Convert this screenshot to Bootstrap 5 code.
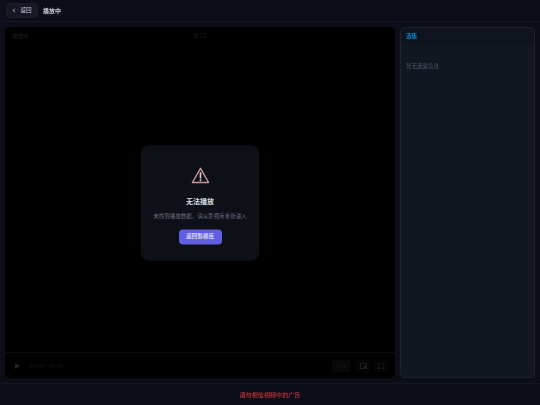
<!DOCTYPE html>
<html lang="zh">
<head>
<meta charset="utf-8">
<title>播放中</title>
<link href="https://cdn.jsdelivr.net/npm/bootstrap@5.3.0/dist/css/bootstrap.min.css" rel="stylesheet">
<style>
html,body{height:100%;margin:0}
body{background:#0b0e17;font-family:Inter,"Noto Sans CJK SC",sans-serif;overflow:hidden}
.shell{height:405px;opacity:.999}
.topbar{height:22px;padding:0 6px;gap:5px;border-bottom:1px solid #141823;background:#0c0f18}
.backbtn{height:15px;width:32px;font-size:5.6px;line-height:1;color:#c9ccd5;background:#171a26;border:1px solid #1b1f2c;border-radius:4px;padding:0;gap:4px}
.backbtn svg{width:4px;height:5px}
.pagetitle{font-size:6px;font-weight:600;color:#c9ccd5}
.mainarea{padding:5px 5px;gap:5px;height:361px}
.player{flex:1 1 auto;background:#000;border-radius:5px;min-width:0}
.ptop{padding:5px 7px 3px;color:#202022;font-size:5.5px;height:14px;line-height:8px}
.ptime{margin-left:164px}
.pstage{flex:1 1 auto}
.errbox{width:118px;height:115px;background:#0f1119;border:1px solid #13151e;border-radius:8px;padding:20px 8px 0}
.errbox svg{width:19px;height:18px;display:block}
.errtitle{font-size:7px;font-weight:600;color:#dfe1e8;margin-top:12px;line-height:10px}
.errtext{font-size:5.5px;color:#6b7080;margin-top:5px;line-height:8px;white-space:nowrap}
.errbtn{height:15px;width:43px;margin-top:10px;background:#6260e2;color:#dcdcf8;font-size:5.6px;font-weight:600;border:0;border-radius:4px;padding:0;line-height:1}
.pctrl{height:26px;border-top:1px solid #0c0c0e;padding:1px 7px 0 10px;color:#1c1c1e;font-size:5.4px}
.pctrl svg{display:block}
.ratebox{width:19px;height:12px;background:#080809;border-radius:2px;margin-right:5px}
.iconbox{width:14px;height:12px;background:#060607;border-radius:2px}
.timelabel{margin-left:9px}
.sidepanel{flex:0 0 135px;background:#131722;border:1px solid #20242f;border-radius:5px}
.sidehead{height:18px;padding:0 5px;background:#10141e;border-bottom:1px solid #161a25;color:#0e8fd9;font-size:5.6px;font-weight:600;border-radius:5px 5px 0 0}
.sidebody{padding:16px 5px;font-size:5.5px;color:#555b69;line-height:8px}
.bottombar{height:22px;border-top:1px solid #141823;background:#0c0f18;color:#c9353c;font-size:6.1px;font-weight:500}
</style>
</head>
<body>
<div class="shell d-flex flex-column">
  <header class="topbar d-flex align-items-center">
    <button type="button" class="backbtn btn d-flex align-items-center justify-content-center">
      <svg viewBox="0 0 4 6"><path d="M3 1 1 3l2 2" fill="none" stroke="#cfd3dc" stroke-width="1"/></svg><span>返回</span>
    </button>
    <span class="pagetitle">播放中</span>
  </header>
  <main class="mainarea d-flex">
    <section class="player d-flex flex-column position-relative">
      <div class="ptop d-flex"><span>播放中</span><span class="ptime">16:22</span></div>
      <div class="pstage"></div>
      <div class="pctrl d-flex align-items-center">
        <svg width="5" height="6" viewBox="0 0 5 6"><path d="M0 0 5 3 0 6Z" fill="#232325"/></svg>
        <span class="timelabel">00:00 / 01:00</span>
        <span class="ratebox d-flex align-items-center justify-content-center ms-auto">1.0x</span>
        <span class="iconbox d-flex align-items-center justify-content-center me-1"><svg width="7" height="6" viewBox="0 0 7 6"><rect x=".5" y=".5" width="6" height="5" fill="none" stroke="#1e1e20"/><rect x="3.500" y="3" width="3" height="2.500" fill="#1e1e20"/></svg></span>
        <span class="iconbox d-flex align-items-center justify-content-center"><svg width="6" height="6" viewBox="0 0 6 6"><path d="M.5 2V.5H2M4 .5h1.500V2M5.500 4v1.500H4M2 5.500H.5V4" fill="none" stroke="#1e1e20"/></svg></span>
      </div>
      <div class="errbox d-flex flex-column align-items-center text-center position-absolute top-50 start-50 translate-middle">
        <svg viewBox="0 0 19 18"><path d="M9.500 1.800 17.600 16H1.400Z" fill="none" stroke="#c99696" stroke-width="1.400" stroke-linejoin="round"/><path d="M9.500 6.300v5" stroke="#e5c4c4" stroke-width="1.700" stroke-linecap="round"/><circle cx="9.500" cy="13.700" r="1" fill="#e5c4c4"/></svg>
        <div class="errtitle">无法播放</div>
        <div class="errtext">未找到播放数据，请从影视库重新进入</div>
        <button type="button" class="errbtn btn">返回影视库</button>
      </div>
    </section>
    <aside class="sidepanel d-flex flex-column">
      <div class="sidehead d-flex align-items-center">选集</div>
      <div class="sidebody">暂无选集信息</div>
    </aside>
  </main>
  <footer class="bottombar d-flex align-items-center justify-content-center">请勿相信视频中的广告</footer>
</div>
</body>
</html>
